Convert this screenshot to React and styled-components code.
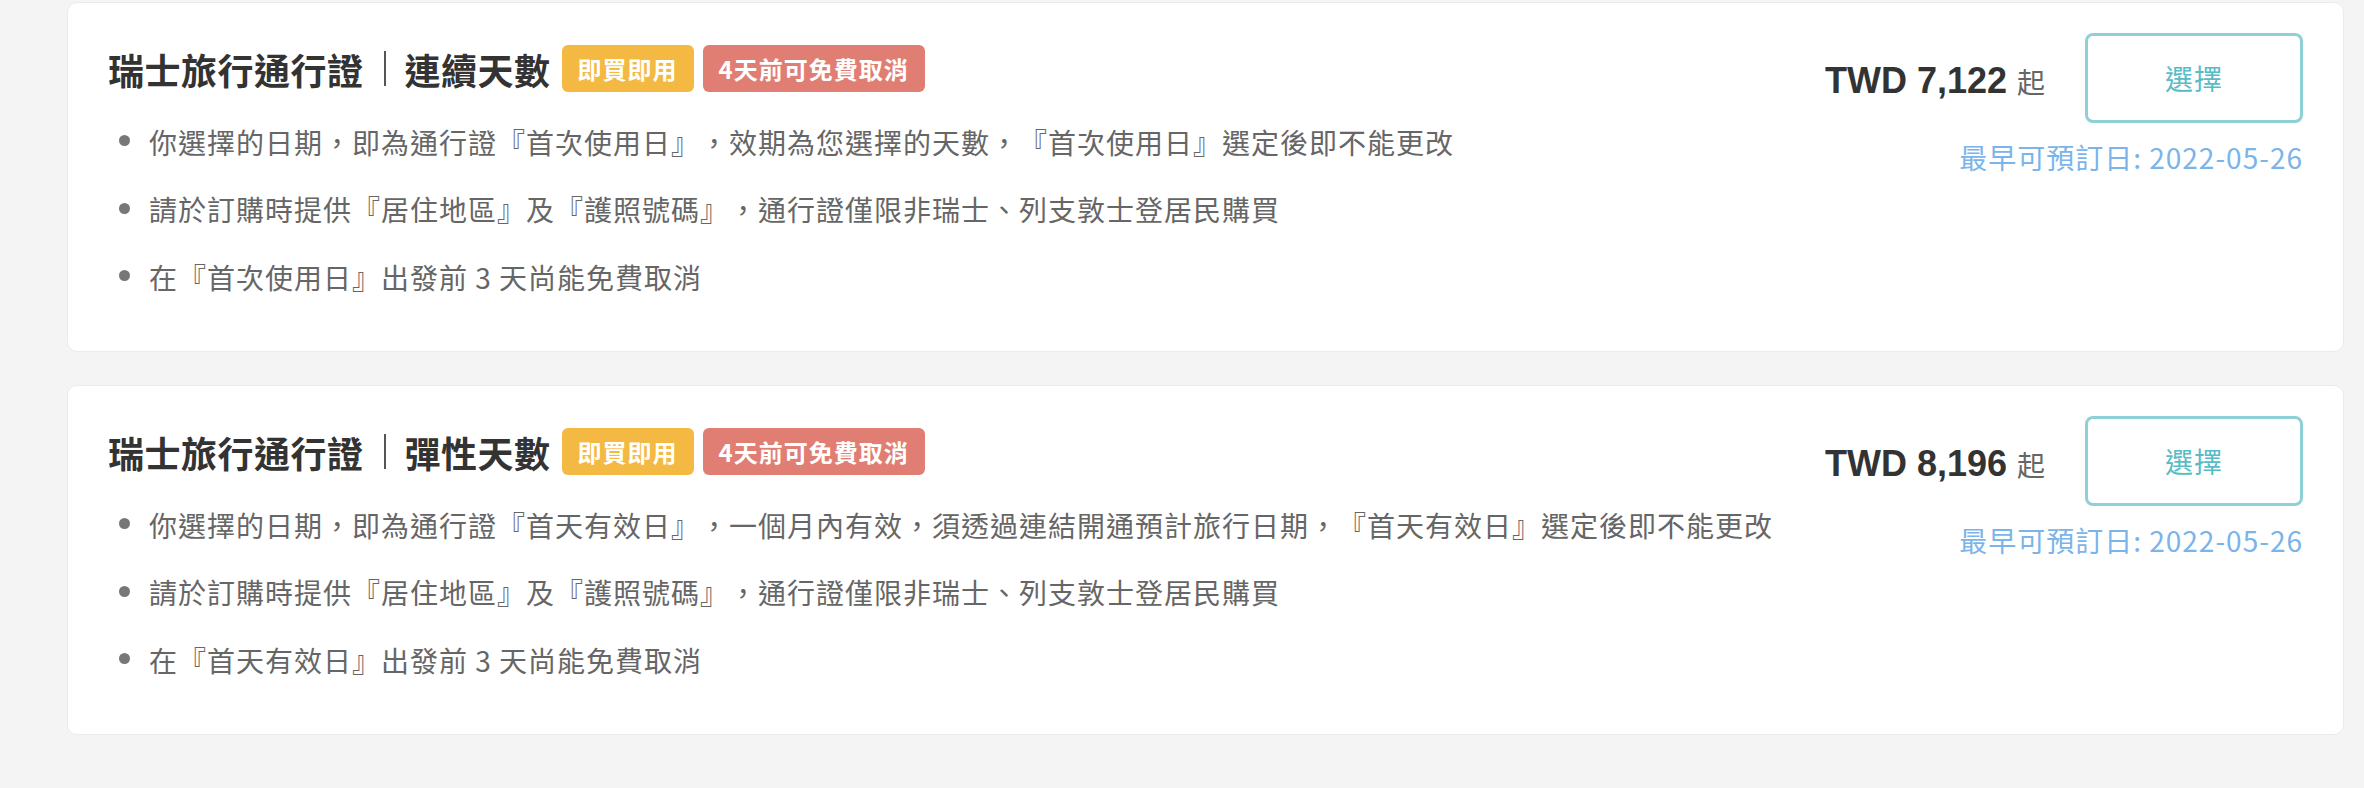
import React from "react";
import styled, { createGlobalStyle } from "styled-components";

const GlobalStyle = createGlobalStyle`
  html, body {
    margin: 0;
    padding: 0;
    background: #f4f4f4;
  }
  body {
    font-family: "Noto Sans CJK TC", "Noto Sans", sans-serif;
    text-spacing-trim: space-all;
  }
`;

const Page = styled.div`
  display: flex;
  flex-direction: column;
  gap: 33px;
  padding: 2px 20px 40px 67px;
  min-height: 788px;
  box-sizing: border-box;
`;

const Card = styled.section`
  display: flex;
  align-items: flex-start;
  background: #ffffff;
  border: 1px solid #ebebeb;
  border-radius: 10px;
  padding: 30px 40px 54px 40px;
  box-sizing: border-box;
  height: 350px;
`;

const Main = styled.div`
  flex: 1;
  min-width: 0;
`;

const TitleRow = styled.div`
  display: flex;
  align-items: center;
  min-height: 71px;
`;

const Title = styled.h3`
  margin: 0;
  font-size: 36px;
  line-height: 50px;
  font-weight: 700;
  letter-spacing: 0.5px;
  color: #333333;
  display: flex;
  align-items: center;
`;

const Divider = styled.span`
  display: inline-block;
  width: 2px;
  height: 35px;
  background: #555555;
  margin: 0 19px 0 20px;
`;

const Badges = styled.div`
  display: flex;
  gap: 9px;
  margin-left: 11px;
`;

const Badge = styled.span`
  display: inline-flex;
  align-items: center;
  height: 47px;
  padding: 0 16px;
  border-radius: 6px;
  background: ${(p) => (p.$tone === "red" ? "#e07e74" : "#f4b942")};
  color: #ffffff;
  font-size: 24px;
  font-weight: 700;
  letter-spacing: 1px;
  white-space: nowrap;
`;

const List = styled.ul`
  list-style: none;
  margin: 17.5px 0 0 0;
  padding: 0 0 0 11px;
  display: flex;
  flex-direction: column;
  gap: 27.5px;
`;

const Item = styled.li`
  display: flex;
  align-items: center;
  font-size: 28px;
  line-height: 40px;
  letter-spacing: 1px;
  color: #666666;
  white-space: nowrap;

  &::before {
    content: "";
    flex: none;
    width: 11px;
    height: 11px;
    border-radius: 50%;
    background: #777777;
    margin-right: 19px;
    margin-top: -2px;
  }
`;

const Side = styled.div`
  display: flex;
  flex-direction: column;
  align-items: flex-end;
`;

const BuyRow = styled.div`
  display: flex;
  align-items: center;
  gap: 40px;
`;

const Price = styled.div`
  display: flex;
  align-items: baseline;
  padding-top: 5px;
  line-height: 1;
`;

const Amount = styled.span`
  font-family: "Liberation Sans", Arial, sans-serif;
  font-size: 36px;
  font-weight: 700;
  color: #333333;
`;

const Suffix = styled.span`
  font-size: 28px;
  color: #666666;
  margin-left: 10px;
`;

const SelectButton = styled.button`
  width: 218px;
  height: 90px;
  box-sizing: border-box;
  background: #ffffff;
  border: 3px solid #8ed0d7;
  border-radius: 8px;
  color: #57bcc6;
  font-family: "Noto Sans CJK TC", sans-serif;
  font-size: 28px;
  letter-spacing: 1px;
  cursor: pointer;
`;

const EarliestDate = styled.div`
  margin-top: 14px;
  font-size: 28px;
  line-height: 40px;
  letter-spacing: 1px;
  color: #7ab4ea;
  white-space: nowrap;
`;

const products = [
  {
    name: "瑞士旅行通行證",
    kind: "連續天數",
    price: "TWD 7,122",
    items: [
      "你選擇的日期，即為通行證『首次使用日』，效期為您選擇的天數，『首次使用日』選定後即不能更改",
      "請於訂購時提供『居住地區』及『護照號碼』，通行證僅限非瑞士、列支敦士登居民購買",
      "在『首次使用日』出發前 3 天尚能免費取消",
    ],
  },
  {
    name: "瑞士旅行通行證",
    kind: "彈性天數",
    price: "TWD 8,196",
    items: [
      "你選擇的日期，即為通行證『首天有效日』，一個月內有效，須透過連結開通預計旅行日期，『首天有效日』選定後即不能更改",
      "請於訂購時提供『居住地區』及『護照號碼』，通行證僅限非瑞士、列支敦士登居民購買",
      "在『首天有效日』出發前 3 天尚能免費取消",
    ],
  },
];

export default function App() {
  return (
    <>
      <GlobalStyle />
      <Page>
        {products.map((p) => (
          <Card key={p.kind}>
            <Main>
              <TitleRow>
                <Title>
                  {p.name}
                  <Divider />
                  {p.kind}
                </Title>
                <Badges>
                  <Badge $tone="yellow">即買即用</Badge>
                  <Badge $tone="red">4天前可免費取消</Badge>
                </Badges>
              </TitleRow>
              <List>
                {p.items.map((t) => (
                  <Item key={t}>{t}</Item>
                ))}
              </List>
            </Main>
            <Side>
              <BuyRow>
                <Price>
                  <Amount>{p.price}</Amount>
                  <Suffix>起</Suffix>
                </Price>
                <SelectButton>選擇</SelectButton>
              </BuyRow>
              <EarliestDate>最早可預訂日: 2022-05-26</EarliestDate>
            </Side>
          </Card>
        ))}
      </Page>
    </>
  );
}
